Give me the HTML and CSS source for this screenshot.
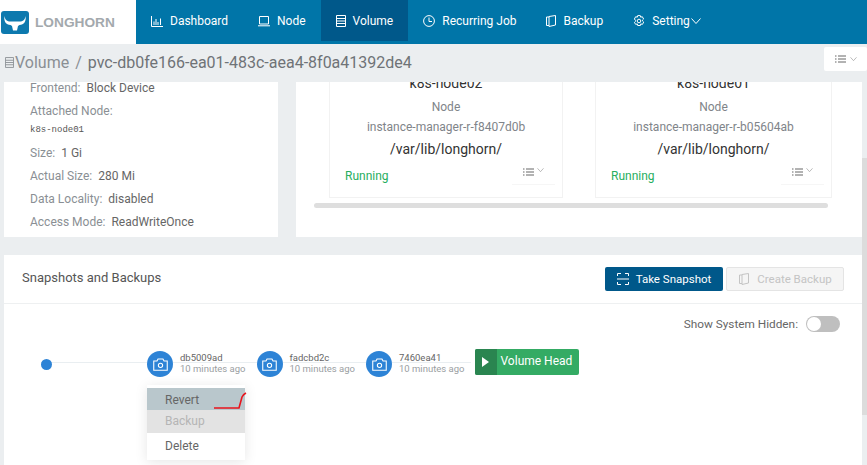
FILE: index.html
```html
<!DOCTYPE html>
<html lang="en">
<head>
  <meta charset="UTF-8" />
  <title>Volume | Longhorn</title>
  <link rel="stylesheet" href="styles.css">
</head>
<body>
  <header class="topbar">
    <a class="logo" href="#">
      <svg class="logo-mark" viewBox="0 0 28 23" width="28" height="23">
        <rect width="28" height="23" rx="3" fill="#0d79ae"/>
        <path d="M3.500 5C4 9 6 10.500 9.500 10.500H18.500C22 10.500 24 9 24.500 5C25.500 10 23 14 18.500 14L17 15 16 19.500H12L11 15 9.500 14C5 14 2.500 10 3.500 5z"/>
      </svg>
      <span class="logo-text">LONGHORN</span>
    </a>
    <nav class="nav">
      <a class="nav-item" href="#">
        <svg class="nav-icon" viewBox="0 0 12 12"><path d="M.5 1v10.500H12M3 10V6.500M5 10V4M7 10V7M9.500 10V3.500" /></svg>
        Dashboard
      </a>
      <a class="nav-item" href="#">
        <svg class="nav-icon" viewBox="0 0 12 12"><path d="M1.500 1.500h9v7.500h-9zM0 10.800h12" /></svg>
        Node
      </a>
      <a class="nav-item active" href="#">
        <svg class="nav-icon narrow" viewBox="0 0 10 12"><path d="M.5.500h9v11h-9zM.5 3.500h9M.5 6h9M.5 8.500h9" /></svg>
        Volume
      </a>
      <a class="nav-item" href="#">
        <svg class="nav-icon" viewBox="0 0 12 12"><circle cx="6" cy="6" r="5.400"/><path d="M6 2.500V6.500H9" /></svg>
        Recurring Job
      </a>
      <a class="nav-item" href="#">
        <svg class="nav-icon narrow" viewBox="0 0 10 12"><path d="M3 1.500 9.500.5v9.500L3 11.500zM3 2H.5v8.500H3" /></svg>
        Backup
      </a>
      <a class="nav-item" href="#">
        <svg class="nav-icon" viewBox="0 0 12 12"><path d="M4.700.6h2.600l.4 1.600 1.600-.5 1.300 2.300-1.200 1.200.1.800 1.200 1.100-1.300 2.300-1.600-.5-.4 1.600H4.700l-.4-1.600-1.600.5L1.400 7.400l1.200-1.100v-.8L1.400 4l1.300-2.300 1.600.5z"/><circle cx="6" cy="6" r="1.800"/></svg>
        Setting<svg class="caret" viewBox="0 0 10 6"><path d="M.5.5 5 5.500 9.500.5" /></svg>
      </a>
    </nav>
  </header>

  <div class="crumbs">
    <svg class="crumb-icon" viewBox="0 0 10 12"><path d="M.5.500h9v11h-9zM.5 3.500h9M.5 6h9M.5 8.500h9" /></svg>
    <span class="crumb-link">Volume</span>
    <span class="crumb-sep">/</span>
    <span class="crumb-name">pvc-db0fe166-ea01-483c-aea4-8f0a41392de4</span>
    <button class="page-menu">
      <svg class="list-icon" viewBox="0 0 11 8"><path d="M3 1h8M3 4h8M3 7h8M0 1h1.500M0 4h1.500M0 7h1.500" /></svg>
      <svg class="caret small" viewBox="0 0 10 6"><path d="M.5.5 5 5.500 9.500.5" /></svg>
    </button>
  </div>

  <main class="content">
    <section class="top-row">
      <div class="card details">
        <p>Frontend: <b>Block Device</b></p>
        <p>Attached Node:</p>
        <p class="node-name">k8s-node01</p>
        <p>Size: <b>1 Gi</b></p>
        <p>Actual Size: <b>280 Mi</b></p>
        <p>Data Locality: <b>disabled</b></p>
        <p>Access Mode: <b>ReadWriteOnce</b></p>
      </div>
      <div class="card replicas">
        <div class="replica-list">
          <div class="replica">
            <div class="replica-host">k8s-node02</div>
            <div class="replica-label">Node</div>
            <div class="replica-label">instance-manager-r-f8407d0b</div>
            <div class="replica-path">/var/lib/longhorn/</div>
            <div class="replica-foot">
              <span class="running">Running</span>
              <span class="replica-menu">
                <svg class="list-icon" viewBox="0 0 11 8"><path d="M3 1h8M3 4h8M3 7h8M0 1h1.500M0 4h1.500M0 7h1.500" /></svg>
                <svg class="caret small" viewBox="0 0 10 6"><path d="M.5.5 5 5.500 9.500.5" /></svg>
              </span>
            </div>
          </div>
          <div class="replica second">
            <div class="replica-host">k8s-node01</div>
            <div class="replica-label">Node</div>
            <div class="replica-label">instance-manager-r-b05604ab</div>
            <div class="replica-path">/var/lib/longhorn/</div>
            <div class="replica-foot">
              <span class="running">Running</span>
              <span class="replica-menu">
                <svg class="list-icon" viewBox="0 0 11 8"><path d="M3 1h8M3 4h8M3 7h8M0 1h1.500M0 4h1.500M0 7h1.500" /></svg>
                <svg class="caret small" viewBox="0 0 10 6"><path d="M.5.5 5 5.500 9.500.5" /></svg>
              </span>
            </div>
          </div>
        </div>
        <div class="hscroll"></div>
      </div>
    </section>

    <section class="card snapshots">
      <div class="snap-head">
        <h2>Snapshots and Backups</h2>
        <button class="btn primary">
          <svg class="btn-icon" viewBox="0 0 12 12"><path d="M.5 3V.5H4M8 .5h3.500V3M.5 9v2.500H4M8 11.500h3.500V9M0 6h12" /></svg>
          Take Snapshot
        </button>
        <button class="btn disabled">
          <svg class="btn-icon" viewBox="0 0 10 12"><path d="M3 1.500 9.500.5v9.500L3 11.500zM3 2H.5v8.500H3" /></svg>
          Create Backup
        </button>
      </div>
      <div class="snap-tools">
        <span>Show System Hidden:</span>
        <span class="switch"></span>
      </div>
      <div class="timeline">
        <span class="start-dot"></span>
        <div class="snap">
          <span class="snap-circle">
            <svg viewBox="0 0 14 12" width="15" height="13"><path d="M.7 2.800h3l1-2h4.600l1 2h3v8.500H.7z"/><circle cx="7" cy="6.800" r="2"/></svg>
          </span>
          <div class="snap-text"><div>db5009ad</div><small>10 minutes ago</small></div>
          <div class="snap-menu">
            <div class="menu-item hover">Revert</div>
            <div class="menu-item off">Backup</div>
            <div class="menu-item">Delete</div>
            <svg class="red-mark" viewBox="0 0 34 18" width="34" height="18"><path d="M1 16H26L29 5C30 3 31 2 33 1" /></svg>
          </div>
        </div>
        <div class="snap">
          <span class="snap-circle">
            <svg viewBox="0 0 14 12" width="15" height="13"><path d="M.7 2.800h3l1-2h4.600l1 2h3v8.500H.7z"/><circle cx="7" cy="6.800" r="2"/></svg>
          </span>
          <div class="snap-text"><div>fadcbd2c</div><small>10 minutes ago</small></div>
        </div>
        <div class="snap">
          <span class="snap-circle">
            <svg viewBox="0 0 14 12" width="15" height="13"><path d="M.7 2.800h3l1-2h4.600l1 2h3v8.500H.7z"/><circle cx="7" cy="6.800" r="2"/></svg>
          </span>
          <div class="snap-text"><div>7460ea41</div><small>10 minutes ago</small></div>
        </div>
        <div class="head-tag">
          <span class="head-arrow"></span>
          <span class="head-label">Volume Head</span>
        </div>
      </div>
    </section>
  </main>
  <div class="vscroll"></div>
</body>
</html>
```

FILE: styles.css
```css
* {
  box-sizing: border-box;
}

html, body {
  height: 100%;
}

body {
  margin: 0;
  position: relative;
  overflow: hidden;
  background-color: #ebeef0;
  color: #666;
  font-family: Roboto, "Open Sans", sans-serif;
  font-size: 12px;
}

a {
  color: inherit;
  text-decoration: none;
}

svg path, svg circle {
  fill: none;
  stroke: currentColor;
  stroke-width: 1;
}

.topbar {
  display: flex;
  height: 44px;
  background-color: #0075a8;
}

.logo {
  display: flex;
  align-items: center;
  gap: 6px;
  width: 136px;
  padding-left: 1px;
  background-color: #fff;
}

.logo-mark path {
  fill: #fff;
  stroke: none;
}

.logo-text {
  color: #a3a9ad;
  font-family: "Liberation Sans", sans-serif;
  font-size: 13.7px;
  font-weight: bold;
}

.nav {
  display: flex;
}

.nav-item {
  display: flex;
  align-items: center;
  gap: 7px;
  height: 41px;
  padding: 0 15px;
  color: #fff;
  font-size: 12px;
}

.nav-item.active {
  background-color: #00588a;
}

.nav-icon {
  width: 12px;
  height: 12px;
}

.nav-icon.narrow {
  width: 10px;
}

.caret {
  width: 10px;
  height: 6px;
  margin-left: -6px;
}

.caret.small {
  width: 7px;
  height: 4px;
  margin-left: 0;
  color: #999;
}

.list-icon {
  width: 11px;
  height: 8px;
  color: #666;
}

.crumbs {
  display: flex;
  align-items: center;
  height: 38px;
  padding: 0 0 2px 5px;
  font-size: 16px;
  color: #8a8f94;
}

.crumb-icon {
  width: 9px;
  height: 11px;
  margin-right: 1px;
}

.crumb-sep {
  margin: 0 6px;
}

.crumb-name {
  color: #6f7377;
}

.page-menu {
  display: flex;
  align-items: center;
  justify-content: center;
  align-self: flex-start;
  gap: 4px;
  width: 43px;
  height: 24px;
  margin: 3px 0 0 auto;
  border: 0;
  border-radius: 2px;
  background-color: #fff;
}

.content {
  display: flex;
  flex-direction: column;
  gap: 18px;
  padding-left: 4px;
  padding-right: 5px;
}

.card {
  background-color: #fff;
}

.top-row {
  display: flex;
  gap: 18px;
  height: 155px;
}

.details {
  display: flex;
  flex-direction: column;
  justify-content: flex-end;
  width: 274px;
  padding: 0 0 3px 26px;
  overflow: hidden;
}

.details p {
  flex: none;
  height: 23px;
  margin: 0;
  line-height: 23px;
  color: #8a8f94;
  font-size: 12px;
}

.details b {
  margin-left: 3px;
  font-weight: normal;
  color: #666;
}

.details .node-name {
  height: 15px;
  margin-bottom: 4px;
  line-height: 15px;
  color: #555;
  font-family: "Liberation Mono", monospace;
  font-size: 9px;
}

.replicas {
  display: flex;
  flex: 1;
  flex-direction: column;
  justify-content: flex-end;
  padding: 0 34px 29px 18px;
  overflow: hidden;
}

.replica-list {
  display: flex;
  flex: none;
  gap: 32px;
  padding-left: 15px;
}

.replica {
  flex: none;
  width: 234px;
  padding: 0 0 12px;
  border: 1px solid #f2f2f2;
  border-top: 0;
  text-align: center;
}

.replica.second {
  width: 237px;
}

.replica-host {
  margin-bottom: 6px;
  color: #333;
  font-size: 14px;
  line-height: 20px;
}

.replica-label {
  margin-bottom: 3px;
  color: #808489;
  font-size: 12px;
  line-height: 17px;
}

.replica-path {
  color: #333;
  font-size: 14px;
  line-height: 20px;
  margin-top: 3px;
}

.replica-foot {
  display: flex;
  justify-content: space-between;
  padding: 8px 7px 0 15px;
  text-align: left;
}

.running {
  color: #27ae60;
  font-size: 12px;
  line-height: 18px;
}

.replica-menu {
  display: flex;
  align-items: flex-start;
  justify-content: center;
  gap: 3px;
  width: 43px;
  height: 18px;
  padding-top: 1px;
  border-bottom: 1px solid #f6f6f6;
}

.hscroll {
  flex: none;
  height: 5px;
  margin-top: 5px;
  border-radius: 3px;
  background-color: #dedede;
}

.snapshots {
  height: 210px;
}

.snap-head {
  display: flex;
  align-items: center;
  gap: 3px;
  height: 49px;
  padding: 0 18px;
  border-bottom: 1px solid #eef0f1;
}

.snap-head h2 {
  flex: 1;
  margin: 0 0 3px;
  color: #555;
  font-size: 13px;
  font-weight: normal;
}

.btn {
  display: flex;
  align-items: center;
  justify-content: center;
  gap: 7px;
  width: 118px;
  height: 24px;
  border: 1px solid transparent;
  border-radius: 2px;
  font-family: inherit;
  font-size: 11.5px;
}

.btn.primary {
  background-color: #00588a;
  color: #fff;
}

.btn.disabled {
  border-color: #e4e4e4;
  background-color: #f5f5f5;
  color: #c4c4c4;
}

.btn-icon {
  width: 12px;
  height: 12px;
}

.snap-tools {
  display: flex;
  align-items: center;
  justify-content: flex-end;
  gap: 8px;
  padding: 12px 22px 0 0;
  font-size: 11.8px;
}

.switch {
  position: relative;
  width: 34px;
  height: 16px;
  border-radius: 8px;
  background-color: #bfbfbf;
}

.switch::after {
  content: "";
  position: absolute;
  top: 1px;
  left: 1px;
  width: 14px;
  height: 14px;
  border-radius: 50%;
  background-color: #fff;
}

.timeline {
  display: flex;
  align-items: center;
  height: 28px;
  margin: 18px 0 0 37px;
  width: 538px;
  background: linear-gradient(#e9eef1, #e9eef1) 0 12px / 430px 1px no-repeat;
}

.start-dot {
  width: 11px;
  height: 11px;
  margin-right: 95px;
  border-radius: 50%;
  background-color: #2d83d6;
}

.snap {
  position: relative;
  display: flex;
  align-items: center;
  gap: 7px;
  width: 109.5px;
}

.snap-circle {
  display: flex;
  align-items: center;
  justify-content: center;
  width: 26px;
  height: 26px;
  border-radius: 50%;
  background-color: #2d83d6;
  color: #fff;
}

.snap-text {
  margin-top: -2px;
  color: #666;
  font-size: 9.500px;
  line-height: 11px;
}

.snap-text small {
  display: block;
  color: #9a9ea2;
  font-size: 9.500px;
}

.snap-menu {
  position: absolute;
  top: 34px;
  left: 0;
  width: 98px;
  padding: 3px 0 4px;
  background-color: #fff;
  box-shadow: 0 2px 12px rgba(0, 0, 0, 0.1);
  z-index: 2;
}

.menu-item {
  height: 23px;
  padding-left: 18px;
  line-height: 23px;
  font-size: 12px;
}

.menu-item:last-of-type {
  padding-top: 2px;
}

.menu-item.hover {
  height: 22px;
  padding-top: 1px;
  background-color: #b9c7cc;
}

.menu-item.off {
  background-color: #e3e3e3;
  color: #b5b5b5;
}

.red-mark {
  position: absolute;
  top: 7px;
  right: -2px;
}

.red-mark path {
  stroke: #e8141c;
  stroke-width: 1.600;
}

.head-tag {
  display: flex;
  width: 104px;
  height: 26px;
  margin: -4px 0 0 -1px;
  border-radius: 2px;
  overflow: hidden;
  background-color: #34ab64;
  color: #fff;
}

.head-arrow {
  display: flex;
  align-items: center;
  width: 22px;
  padding-left: 7px;
  background-color: #2a8550;
}

.head-arrow::before {
  content: "";
  border-left: 7px solid #fff;
  border-top: 5.500px solid transparent;
  border-bottom: 5.500px solid transparent;
}

.head-label {
  padding-left: 4px;
  line-height: 24px;
  font-size: 12px;
}

.vscroll {
  position: absolute;
  top: 158px;
  right: 0;
  width: 5px;
  height: 257px;
  background-color: #dcdcdc;
}
```
